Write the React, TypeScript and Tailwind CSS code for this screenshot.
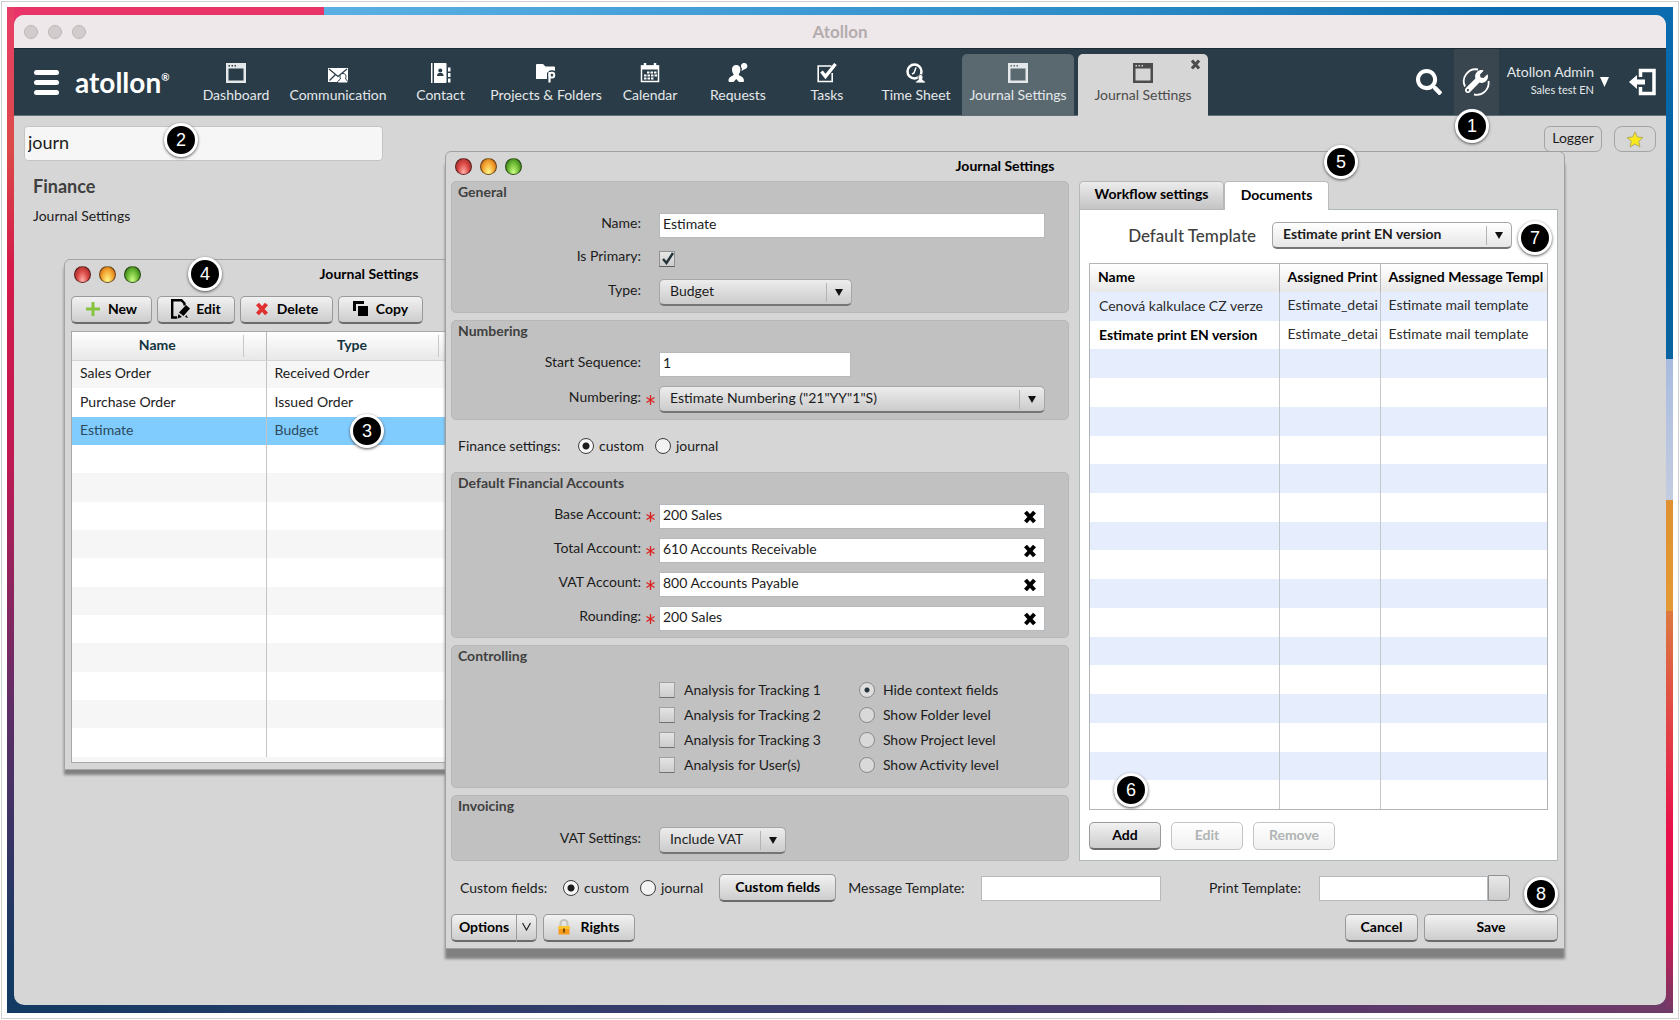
import { useState } from "react";
import type { ReactNode } from "react";
import { FaSearch, FaWrench } from "react-icons/fa";

const buttonStyle =
  "flex items-center justify-center rounded-[5px] border border-[#9a9a9a] border-b-2 border-b-[#6b6b6b] bg-linear-to-b from-[#f2f2f2] to-[#cdcdcd] pb-[2px] text-sm font-bold text-black";

const fieldStyle =
  "h-[25px] border border-[#b4babd] bg-white px-[3px] pb-[5px] text-sm text-[#1c1c1c] outline-none";

const disabledStyle =
  "h-7 rounded-[5px] border border-[#c4c4c4] bg-linear-to-b from-white to-[#f0f0f0] pb-[2px] text-sm font-bold text-[#b0b4b4]";

const journals = [
  { name: "Sales Order", type: "Received Order" },
  { name: "Purchase Order", type: "Issued Order" },
  { name: "Estimate", type: "Budget" },
];

const documents = [
  { name: "Cenová kalkulace CZ verze", print: "Estimate_detai", message: "Estimate mail template" },
  { name: "Estimate print EN version", print: "Estimate_detai", message: "Estimate mail template" },
];

const accounts = [
  { label: "Base Account:", value: "200 Sales" },
  { label: "Total Account:", value: "610 Accounts Receivable" },
  { label: "VAT Account:", value: "800 Accounts Payable" },
  { label: "Rounding:", value: "200 Sales" },
];

const tracking = [
  "Analysis for Tracking 1",
  "Analysis for Tracking 2",
  "Analysis for Tracking 3",
  "Analysis for User(s)",
];

const levels = [
  "Hide context fields",
  "Show Folder level",
  "Show Project level",
  "Show Activity level",
];

const steps = [
  { n: 1, place: "right-[191px] top-[109px]" },
  { n: 2, place: "left-[164px] top-[123px]" },
  { n: 3, place: "left-[350px] top-[414px]" },
  { n: 4, place: "left-[188px] top-[257px]" },
  { n: 5, place: "right-[322px] top-[145px]" },
  { n: 6, place: "right-[532px] top-[773px]" },
  { n: 7, place: "right-[128px] top-[221px]" },
  { n: 8, place: "right-[122px] top-[877px]" },
];

function WindowIcon() {
  return (
    <svg width="20" height="20" viewBox="0 0 20 20" fill="currentColor">
      <path
        fillRule="evenodd"
        d="M0 0h20v20H0zM2.5 5.5h15v12h-15zM2.5 2v1.5H4V2zM5.5 2v1.5H7V2zM8.5 2v1.5H10V2z"
      />
    </svg>
  );
}

function MailIcon() {
  return (
    <svg width="20" height="20" viewBox="0 0 20 20">
      <path d="M0 5h20v14H0z" fill="#fff" />
      <path d="M1 6l9 7.5L19 6M1.5 17.5l6-6" fill="none" stroke="#2a3c48" strokeWidth="1.3" />
      <path
        d="M9.5 20c0-3 2.500-3 3-4-1-2.500-.5-5.500 2.500-5.500s3.500 3 2.500 5.500c.5 1 2.500 1 2.500 4z"
        fill="#fff"
        stroke="#2a3c48"
      />
    </svg>
  );
}

function ContactIcon() {
  return (
    <svg width="20" height="20" viewBox="0 0 20 20" fill="#fff">
      <path d="M0 0h1.500v20H0zM3 0h11.500q1 0 1 1v18q0 1-1 1H3zM17 4.500h2.500v4H17zM17 10h2.500v4H17zM17 15.500h2.500v4H17z" />
      <circle cx="9.300" cy="7.500" r="2" fill="#2a3c48" />
      <path d="M6 13c0-2.500 1.500-3 3.300-3s3.300.5 3.300 3z" fill="#2a3c48" />
    </svg>
  );
}

// the badge on the folder is a ring on a stem
function FolderIcon() {
  return (
    <svg width="20" height="20" viewBox="0 0 20 20">
      <path d="M0 2q0-1 1-1h6l2.500 2.500H18q1 0 1 1V16H0z" fill="#fff" />
      <g fill="none">
        <path d="M13.500 20V9.500" stroke="#2a3c48" strokeWidth="5" />
        <rect x="13.500" y="9.500" width="5" height="5" rx="2" stroke="#2a3c48" strokeWidth="4.500" />
        <path d="M13.500 19.500V9" stroke="#fff" strokeWidth="2.200" />
        <rect x="13.500" y="9.800" width="4.700" height="4.700" rx="2" stroke="#fff" strokeWidth="2" />
      </g>
    </svg>
  );
}

function CalendarIcon() {
  return (
    <svg width="20" height="20" viewBox="0 0 20 20" fill="none" stroke="#fff">
      <path d="M1.500 3h17v15.500h-17z" strokeWidth="1.500" />
      <path d="M1 4.500h18" strokeWidth="4" />
      <path d="M5 0v4M15 0v4" strokeWidth="2.500" />
      <path d="M7 9.500h10M4 12.500h13M4 15.500h10" strokeWidth="2.200" strokeDasharray="2.500 1" />
    </svg>
  );
}

function RequestIcon() {
  return (
    <svg width="20" height="20" viewBox="0 0 20 20" fill="#fff">
      <path d="M4 6.500C4 3.500 5.500 2 8.200 2s4.200 1.500 4.200 4.500c0 2.500-1 3.500-1.700 5 .8 2 5.300 1.500 5.300 6.500q0 1-1 1h-4L8.200 16 5.500 19h-4q-1 0-1-1c0-5 4.500-4.500 5.200-6.500-.7-1.500-1.700-2.500-1.700-5z" />
      <path d="M13.500 8l.5-2.500a3.200 3.200 0 1 1 2.500.8z" />
    </svg>
  );
}

function TaskIcon() {
  return (
    <svg width="20" height="20" viewBox="0 0 20 20" fill="none" stroke="#fff">
      <path d="M14.500 3H1.200v15.500h14V10" strokeWidth="1.600" />
      <path d="M4.500 8.500l4 5L18.500 1" strokeWidth="3.400" />
    </svg>
  );
}

function TimeIcon() {
  return (
    <svg width="20" height="20" viewBox="0 0 20 20" fill="none" stroke="#fff">
      <circle cx="8.500" cy="8.500" r="7" strokeWidth="2.500" />
      <path d="M10 4.500L8 10l-2 1" strokeWidth="1.500" />
      <path
        d="M9.500 20c0-2.500 2.500-2.500 3-3.500-1-2-.5-5 2-5s3 3 2 5c.5 1 3 1 3 3.500z"
        fill="#fff"
        stroke="#2a3c48"
        strokeWidth=".8"
      />
    </svg>
  );
}

function CrossIcon({ size, color }: { size: number; color: string }) {
  return (
    <svg width={size} height={size} viewBox="0 0 14 14">
      <path d="M2.500 2l9 10M11.500 2l-9 10" stroke={color} strokeWidth="4" />
    </svg>
  );
}

function EditIcon() {
  return (
    <svg width="19" height="20" viewBox="0 0 19 20">
      <path
        d="M6 18.500H1.200V1.200h9.300l3 3.300v2"
        fill="none"
        stroke="#000"
        strokeWidth="2.400"
      />
      <path d="M8 13.500l7-7.500 4 3.500-6.500 7.500zM7.500 15l3.500 3-4.500 1.500zM14 18l1.500-2 1.500 3z" fill="#000" />
    </svg>
  );
}

function LockIcon() {
  return (
    <svg width="12" height="16" viewBox="0 0 12 16">
      <path d="M2.500 8V4.500a3.500 3.500 0 0 1 7 0V8" fill="none" stroke="#c4c4b8" strokeWidth="2" />
      <path d="M.5 7h11v8.500H.5z" fill="#f59a1c" />
      <path d="M.5 7h11v3H.5z" fill="#ffc72e" />
      <path d="M5 9.500h2v4H5z" fill="#7a4a08" />
    </svg>
  );
}

function NavItem({ width, label, children }: { width: string; label: string; children: ReactNode }) {
  return (
    <button className={`${width} flex flex-col items-center gap-1 pt-[9px] text-sm leading-4 text-[#e4e8ea]`}>
      {children}
      <span className="whitespace-nowrap">{label}</span>
    </button>
  );
}

function Lights() {
  const base = "size-[17px] rounded-full border border-black/50";
  return (
    <div className="flex gap-2">
      <button aria-label="Close" className={`${base} bg-[radial-gradient(ellipse_at_50%_90%,#ffb0a8,#dc4a46_50%,#8c2424_95%)]`} />
      <button aria-label="Minimize" className={`${base} bg-[radial-gradient(ellipse_at_50%_90%,#fff88a,#f4a430_55%,#b45412_95%)]`} />
      <button aria-label="Zoom" className={`${base} bg-[radial-gradient(ellipse_at_50%_90%,#ccff84,#66b430_55%,#2c6414_95%)]`} />
    </div>
  );
}

function TitleBar({ title }: { title: string }) {
  return (
    <header className="relative flex h-[29px] items-center px-[9px]">
      <Lights />
      <h2 className="pointer-events-none absolute inset-x-0 pb-[2px] text-center text-sm font-bold text-black">
        {title}
      </h2>
    </header>
  );
}

function Section({ title, children }: { title: string; children: ReactNode }) {
  return (
    <section className="rounded-[5px] border border-[#b7b7b7] bg-[#c1c1c1] pr-[23px] pb-[6px]">
      <h3 className="mb-[9px] h-[22px] pl-[6px] text-sm leading-5 font-bold text-[#404040]">{title}</h3>
      <div className="flex flex-col gap-[9px]">{children}</div>
    </section>
  );
}

function Row({ id, label, required, children }: { id: string; label: string; required?: boolean; children: ReactNode }) {
  return (
    <div className="flex items-center">
      <label htmlFor={id} className="w-[189px] pb-[6px] text-right text-sm leading-4 text-[#1c1c1c]">
        {label}
      </label>
      <span className="flex w-[18px] justify-center">
        {required && (
          <svg width="9" height="10" viewBox="0 0 9 10">
            <path d="M4.500 0v10M.5 2.500l8 5M8.500 2.500l-8 5" stroke="#dc2020" strokeWidth="1.300" />
          </svg>
        )}
      </span>
      {children}
    </div>
  );
}

function Select({ id, width, value, light }: { id: string; width: string; value: string; light?: boolean }) {
  return (
    <div className={`relative ${width}`}>
      <select
        id={id}
        className={`block h-[27px] w-full appearance-none rounded-[5px] border border-[#a6a6a6] border-b-2 border-b-[#757575] bg-linear-to-b px-[10px] pb-[3px] text-sm text-[#1c1c1c] outline-none ${
          light ? "from-white to-[#e6e6e6] font-bold" : "from-[#ededed] to-[#cbcbcb]"
        }`}
      >
        <option>{value}</option>
      </select>
      <span className="pointer-events-none absolute inset-y-1 right-[9px] flex items-center border-l border-[#b4b4b4] pl-2">
        <svg width="8" height="7" viewBox="0 0 8 7">
          <path d="M0 0h8L4 7z" fill="#111" />
        </svg>
      </span>
    </div>
  );
}

function Radio({ name, label, checked, gray }: { name: string; label: string; checked?: boolean; gray?: boolean }) {
  return (
    <label className={`flex items-center text-sm text-[#1c1c1c] ${gray ? "h-[25px] gap-2" : "gap-[5px]"}`}>
      <input
        type="radio"
        name={name}
        defaultChecked={checked}
        className={
          gray
            ? "size-4 appearance-none rounded-full border border-[#8a8a8a] bg-[#d9d9d9] checked:bg-[radial-gradient(circle,#26343c_0_2px,#dedede_3px)]"
            : "size-4 appearance-none rounded-full border-[1px] border-[#3c3c3c] bg-[#f2f2f2] checked:bg-[radial-gradient(circle,#1c1c1c_0_3px,#f6f6f6_4px)]"
        }
      />
      {label}
    </label>
  );
}

function NavBar() {
  return (
    <nav className="flex h-[68px] shrink-0 items-stretch border-t border-b border-t-[#1c2a34] border-b-[#5f7079] bg-[#2a3c48]">
      <button aria-label="Menu" className="ml-5 flex w-[25px] flex-col justify-center gap-[5px]">
        <span className="h-[5px] rounded-full bg-white" />
        <span className="h-[5px] rounded-full bg-white" />
        <span className="h-[5px] rounded-full bg-white" />
      </button>
      <a href="#" className="ml-4 flex w-[101px] items-center text-[28px] font-bold text-white">
        atollon<sup className="text-[10px]">®</sup>
      </a>
      <div className="ml-4 flex flex-1 pt-[5px]">
        <NavItem width="w-[88px]" label="Dashboard"><WindowIcon /></NavItem>
        <NavItem width="w-[116px]" label="Communication"><MailIcon /></NavItem>
        <NavItem width="w-[89px]" label="Contact"><ContactIcon /></NavItem>
        <NavItem width="w-[122px]" label="Projects & Folders"><FolderIcon /></NavItem>
        <NavItem width="w-[86px]" label="Calendar"><CalendarIcon /></NavItem>
        <NavItem width="w-[90px]" label="Requests"><RequestIcon /></NavItem>
        <NavItem width="w-[88px]" label="Tasks"><TaskIcon /></NavItem>
        <NavItem width="w-[90px]" label="Time Sheet"><TimeIcon /></NavItem>
        <div className="ml-px flex rounded-t-[5px] bg-[#5a6970]">
          <NavItem width="w-[112px]" label="Journal Settings"><WindowIcon /></NavItem>
        </div>
        <div className="relative -mb-px ml-1 flex rounded-t-[5px] bg-[#d6d6d6]">
          <button className="flex w-[130px] flex-col items-center gap-1 pt-[9px] text-sm leading-4 text-[#4c4c4c]">
            <WindowIcon />
            <span className="whitespace-nowrap">Journal Settings</span>
          </button>
          <button aria-label="Close tab" className="absolute top-[5px] right-[7px]">
            <CrossIcon size={11} color="#4c4c4c" />
          </button>
        </div>
      </div>
      <button aria-label="Search" className="mr-3 text-white">
        <FaSearch size={26} />
      </button>
      <button aria-label="Settings" className="flex w-[45px] items-center justify-center bg-[#3a464f] text-white">
        <svg width="28" height="28" viewBox="0 0 28 28">
          <path
            d="M16 1.500A12 12 0 0 0 3 18.500M12 26.500A12 12 0 0 0 26.500 13"
            fill="none"
            stroke="#fff"
            strokeWidth="1.800"
          />
          <FaWrench x={3} y={2} size={23} />
        </svg>
      </button>
      <button className="ml-2 flex items-center gap-[6px] text-right text-[#e4e8ea]">
        <span className="flex flex-col pb-1">
          <span className="text-sm leading-5">Atollon Admin</span>
          <span className="text-[11px] leading-4">Sales test EN</span>
        </span>
        <svg width="9" height="10" viewBox="0 0 9 10">
          <path d="M0 0h9L4.500 10z" fill="#fff" />
        </svg>
      </button>
      <button aria-label="Log out" className="mr-[10px] ml-5">
        <svg width="27" height="28" viewBox="0 0 27 28">
          <path d="M11.500 9V2.500H25v23H11.500V19" fill="none" stroke="#fff" strokeWidth="3.500" />
          <path d="M0 14l8-7v4.500h8v5H8V21z" fill="#fff" />
        </svg>
      </button>
    </nav>
  );
}

function JournalList() {
  const [selected, setSelected] = useState("Estimate");
  const rows = Array.from({ length: 14 }, (_, i) => journals[i] ?? { name: "", type: "" });

  return (
    <div className="absolute top-[143px] left-[50px] w-[610px] rounded-t-[6px] border border-[#a4a4a4] bg-[#d6d6d6] shadow-[0_5px_3px_#808080]">
      <TitleBar title="Journal Settings" />
      <div className="flex gap-[5px] px-[6px] pt-[7px]">
        <button className={`${buttonStyle} h-7 w-[81px] gap-2`}>
          <svg width="14" height="14" viewBox="0 0 14 14">
            <path d="M7 0v14M0 7h14" stroke="#86c440" strokeWidth="3" />
          </svg>
          New
        </button>
        <button className={`${buttonStyle} h-7 w-[78px] gap-[6px]`}>
          <EditIcon />
          Edit
        </button>
        <button className={`${buttonStyle} h-7 w-[93px] gap-2`}>
          <CrossIcon size={14} color="#e03030" />
          Delete
        </button>
        <button className={`${buttonStyle} h-7 w-[85px] gap-2`}>
          <svg width="15" height="15" viewBox="0 0 15 15">
            <path d="M1.500 10V1.500H11" fill="none" stroke="#000" strokeWidth="3" />
            <path d="M5 5h10v10H5z" fill="#000" />
          </svg>
          Copy
        </button>
      </div>
      <div className="mx-[6px] mt-[7px] mb-[6px] h-[432px] overflow-hidden border border-[#a8a8a8] bg-[#f6f6f6]">
        <table className="h-[425px] w-full table-fixed border-collapse text-left text-sm text-[#1c1c1c]">
          <thead>
            <tr className="h-7 bg-linear-to-b from-white to-[#e8e8e8] text-[#123440]">
              {["Name", "Type", ""].map((title) => (
                <th key={title} className="w-[195px] border-r border-b border-r-[#b4b8ba] border-b-[#d4d4d4] p-0 first:w-[194px] last:w-auto">
                  <span className="mr-[22px] block h-[22px] border-r border-[#c8c8c8] text-center leading-5 font-bold">
                    {title}
                  </span>
                </th>
              ))}
            </tr>
          </thead>
          <tbody>
            {rows.map((row, i) => (
              <tr
                key={i}
                onClick={() => row.name && setSelected(row.name)}
                className={
                  row.name && row.name === selected
                    ? "h-7 bg-[#80ccff] text-[#2c4a5c]"
                    : "h-7 odd:bg-[#f6f6f6] even:bg-white"
                }
              >
                <td className="border-r border-[#c4c4c4] pt-0 pb-[2px] pl-2">{row.name}</td>
                <td className="border-r border-[#c4c4c4] pt-0 pb-[2px] pl-2">{row.type}</td>
                <td />
              </tr>
            ))}
          </tbody>
        </table>
      </div>
    </div>
  );
}

function DocumentsPanel() {
  const rows = Array.from({ length: 18 }, (_, i) => documents[i] ?? { name: "", print: "", message: "" });
  const columns = ["Name", "Assigned Print", "Assigned Message Templ"];

  return (
    <div className="flex w-[479px] shrink-0 flex-col">
      <div className="relative z-10 -mb-px flex">
        <button className="h-[29px] w-[145px] rounded-t-[4px] border border-[#b4b8b8] bg-linear-to-b from-[#ececec] to-[#c4c4c4] pb-1 text-sm font-bold">
          Workflow settings
        </button>
        <button className="h-[29px] w-[105px] rounded-t-[4px] border border-b-0 border-[#b8bcbc] bg-white pb-[2px] text-sm font-bold">
          Documents
        </button>
      </div>
      <div className="flex flex-1 flex-col border border-[#b0b8b8] bg-white px-[9px] pt-3 pb-[10px]">
        <div className="flex items-center justify-end gap-4 pr-[36px]">
          <label htmlFor="default-template" className="text-[17px] font-medium text-[#404040]">
            Default Template
          </label>
          <Select id="default-template" width="w-[240px]" value="Estimate print EN version" light />
        </div>
        <div className="mt-[14px] mb-3 flex-1 overflow-hidden border border-[#b0b4b4]">
          <table className="h-full w-full table-fixed border-collapse text-left text-sm text-[#2c2c2c]">
            <thead>
              <tr className="h-7 bg-linear-to-b from-white to-[#e8e8e8] text-black">
                {columns.map((title) => (
                  <th key={title} className="border-r border-[#b4b8b8] pt-0 pr-0 pb-[2px] pl-2 font-bold whitespace-nowrap first:w-[189px] last:w-auto last:border-r-0 nth-2:w-[101px]">
                    {title}
                  </th>
                ))}
              </tr>
            </thead>
            <tbody>
              {rows.map((row, i) => (
                <tr key={i} className="h-7 odd:bg-[#e6eefe] even:bg-white">
                  <td className={`border-r border-[#c4c8cc] py-0 pl-[9px] whitespace-nowrap ${i === 1 ? "font-bold text-black" : ""}`}>
                    {row.name}
                  </td>
                  <td className="border-r border-[#c4c8cc] pt-0 pr-0 pb-[2px] pl-2">{row.print}</td>
                  <td className="pt-0 pb-[2px] pl-2 whitespace-nowrap">{row.message}</td>
                </tr>
              ))}
            </tbody>
          </table>
        </div>
        <div className="flex gap-[10px]">
          <button className={`${buttonStyle} h-7 w-[72px]`}>Add</button>
          <button disabled className={`${disabledStyle} w-[72px]`}>
            Edit
          </button>
          <button disabled className={`${disabledStyle} w-[82px]`}>
            Remove
          </button>
        </div>
      </div>
    </div>
  );
}

function JournalForm() {
  return (
    <div className="flex min-w-0 flex-1 flex-col gap-[7px]">
      <Section title="General">
        <Row id="name" label="Name:">
          <input id="name" defaultValue="Estimate" className={`${fieldStyle} min-w-0 flex-1`} />
        </Row>
        <Row id="primary" label="Is Primary:">
          <span className="relative flex h-[23px] items-center">
            <input
              id="primary"
              type="checkbox"
              defaultChecked
              className="peer size-4 appearance-none border border-[#909090] border-b-[#606060] bg-linear-to-b from-[#e8e8e8] to-[#cccccc]"
            />
            <svg
              className="pointer-events-none invisible absolute left-[3px] peer-checked:visible"
              width="12"
              height="14"
              viewBox="0 0 12 14"
            >
              <path d="M1 7l3.500 4L11 1" fill="none" stroke="#26343c" strokeWidth="2.500" />
            </svg>
          </span>
        </Row>
        <Row id="type" label="Type:">
          <Select id="type" width="w-[193px]" value="Budget" />
        </Row>
      </Section>

      <Section title="Numbering">
        <Row id="sequence" label="Start Sequence:">
          <input id="sequence" defaultValue="1" className={`${fieldStyle} w-[192px]`} />
        </Row>
        <Row id="numbering" label="Numbering:" required>
          <Select id="numbering" width="flex-1" value={'Estimate Numbering ("21"YY"1"S)'} />
        </Row>
      </Section>

      <div className="flex h-[38px] items-center pl-[7px] text-sm text-[#1c1c1c]">
        <span className="w-[120px]">Finance settings:</span>
        <div className="flex gap-[11px]">
          <Radio name="finance" label="custom" checked />
          <Radio name="finance" label="journal" />
        </div>
      </div>

      <Section title="Default Financial Accounts">
        {accounts.map((account) => (
          <Row key={account.label} id={account.label} label={account.label} required>
            <div className="relative flex flex-1">
              <input id={account.label} defaultValue={account.value} className={`${fieldStyle} w-full`} />
              <button aria-label="Clear" className="absolute inset-y-0 right-2 flex items-center">
                <CrossIcon size={14} color="#000" />
              </button>
            </div>
          </Row>
        ))}
      </Section>

      <Section title="Controlling">
        <div className="flex gap-[38px] pb-1 pl-[207px]">
          <div>
            {tracking.map((label) => (
              <label key={label} className="flex h-[25px] items-center gap-[9px] text-sm text-[#1c1c1c]">
                <input
                  type="checkbox"
                  className="size-4 appearance-none border border-[#a0a0a0] border-b-[#707070] bg-linear-to-b from-[#e4e4e4] to-[#cccccc] checked:bg-[#404040] checked:bg-none"
                />
                {label}
              </label>
            ))}
          </div>
          <div>
            {levels.map((label, i) => (
              <Radio key={label} name="level" label={label} checked={i === 0} gray />
            ))}
          </div>
        </div>
      </Section>

      <Section title="Invoicing">
        <Row id="vat" label="VAT Settings:">
          <Select id="vat" width="w-[127px]" value="Include VAT" />
        </Row>
      </Section>
    </div>
  );
}

function JournalSettings() {
  return (
    <div className="absolute top-[35px] right-[101px] left-[431px] rounded-t-[6px] border border-[#a0a0a0] bg-[#d6d6d6] pr-[6px] pb-[6px] pl-[5px] shadow-[0_10px_3px_#808080]">
      <div className="-mr-[6px] -ml-[5px]">
        <TitleBar title="Journal Settings" />
      </div>
      <div className="flex gap-[10px]">
        <JournalForm />
        <DocumentsPanel />
      </div>

      <div className="mt-[13px] flex h-7 items-center pl-[9px] text-sm text-[#1c1c1c]">
        <span className="w-[103px]">Custom fields:</span>
        <div className="flex gap-[11px]">
          <Radio name="custom-fields" label="custom" checked />
          <Radio name="custom-fields" label="journal" />
        </div>
        <button className={`${buttonStyle} ml-4 h-7 w-[117px]`}>Custom fields</button>
        <label htmlFor="message-template" className="ml-3 w-[133px]">
          Message Template:
        </label>
        <input id="message-template" className={`${fieldStyle} w-[180px]`} />
        <label htmlFor="print-template" className="ml-auto">
          Print Template:
        </label>
        <input id="print-template" className={`${fieldStyle} ml-[18px] w-[169px]`} />
        <button
          aria-label="Choose print template"
          className="mr-12 h-[26px] w-[22px] rounded-r-[4px] border border-[#909090] bg-linear-to-b from-[#e8e8e8] to-[#cdcdcd]"
        />
      </div>

      <div className="mt-3 flex gap-[6px]">
        <div className="flex">
          <button className={`${buttonStyle} h-7 w-[66px] rounded-r-none`}>Options</button>
          <button aria-label="More options" className={`${buttonStyle} h-7 w-5 rounded-l-none border-l-0`}>
            <svg width="9" height="9" viewBox="0 0 9 9">
              <path d="M.5 1l4 7 4-7" fill="none" stroke="#222" strokeWidth="1.200" />
            </svg>
          </button>
        </div>
        <button className={`${buttonStyle} h-7 w-[92px] gap-[10px]`}>
          <LockIcon />
          Rights
        </button>
        <button className={`${buttonStyle} ml-auto h-7 w-[73px]`}>Cancel</button>
        <button className={`${buttonStyle} h-7 w-[134px]`}>Save</button>
      </div>
    </div>
  );
}

function App() {
  const [query, setQuery] = useState("journ");

  return (
    <main className="relative flex min-h-screen flex-col bg-white p-px font-[family-name:Lato,sans-serif]">
      <div className="flex flex-1 flex-col border border-[#d0d0d0] p-[5px]">
        <div className="flex flex-1 flex-col bg-[linear-gradient(#e83e68,#dc4b48_14%,#d41a4a_26%,#c01a54_45%,#5f2e68_70%,#123a62_95%),linear-gradient(#0b6cb0,#0060a0_20%,#0a64a0_35%,#a8bce0_35%,#c4cce0_49%,#e09030_49%,#e49a34_60%,#dc7a40_60%,#e8104a_82%,#d01850_92%,#703a68),linear-gradient(90deg,#e83468_19%,#5ab0e4_19%,#2c8cc8_66%,#0b6cb0_90%),linear-gradient(90deg,#123a62,#2f3d6b_30%,#453a6b_62%,#703a68)] bg-[size:7px_100%,7px_100%,100%_20px,100%_20px] bg-[position:left,right,top,bottom] bg-no-repeat px-[7px] py-2">
          <div className="flex flex-1 flex-col overflow-hidden rounded-[10px] bg-[#d6d6d6]">
            <header className="relative flex h-[33px] shrink-0 items-center bg-[#eee8ea] px-[10px]">
              <div className="flex gap-[10px]">
                <button aria-label="Close" className="size-[14px] rounded-full border border-[#bcb6b8] bg-[#d2cccd]" />
                <button aria-label="Minimize" className="size-[14px] rounded-full border border-[#bcb6b8] bg-[#d2cccd]" />
                <button aria-label="Full screen" className="size-[14px] rounded-full border border-[#bcb6b8] bg-[#d2cccd]" />
              </div>
              <h1 className="absolute inset-x-0 text-center text-[17px] font-bold text-[#b4acae]">Atollon</h1>
            </header>

            <NavBar />

            <div className="relative min-h-[880px] flex-1">
              <div className="flex items-start justify-between px-[10px] pt-[10px]">
                <input
                  aria-label="Search settings"
                  value={query}
                  onChange={(e) => setQuery(e.target.value)}
                  className="h-[35px] w-[359px] rounded-[4px] border border-[#c4c4c4] bg-[#f6f6f6] px-[3px] pb-1 text-lg text-[#1c1c1c] outline-none"
                />
                <div className="flex gap-3">
                  <button className="h-[26px] w-[58px] rounded-[6px] border border-[#a4a4a4] pb-[2px] text-sm text-[#1c1c1c]">
                    Logger
                  </button>
                  <button
                    aria-label="Favorite"
                    className="flex h-[26px] w-[42px] items-center justify-center rounded-[8px] border border-[#a4a4a4]"
                  >
                    <svg width="18" height="17" viewBox="0 0 18 17">
                      <path
                        d="M9 .8l2.300 5.200 5.700.5-4.300 3.800 1.300 5.700L9 13l-5 3 1.300-5.700L1 6.500 6.700 6z"
                        fill="#f8e81c"
                        stroke="#b4ac60"
                      />
                    </svg>
                  </button>
                </div>
              </div>
              <div className="px-[19px] pt-[11px]">
                <h2 className="text-lg font-bold text-[#404040]">Finance</h2>
                <a href="#" className="mt-[6px] block text-sm text-[#1c1c1c]">
                  Journal Settings
                </a>
              </div>

              <JournalList />
              <JournalSettings />
            </div>
          </div>
        </div>
      </div>

      {steps.map((step) => (
        <span
          key={step.n}
          className={`${step.place} absolute flex size-[34px] items-center justify-center rounded-full border-[3px] border-white bg-black font-[family-name:'Liberation_Sans',sans-serif] text-lg text-white shadow-[0_1px_3px_#505050]`}
        >
          {step.n}
        </span>
      ))}
    </main>
  );
}

export default App;
